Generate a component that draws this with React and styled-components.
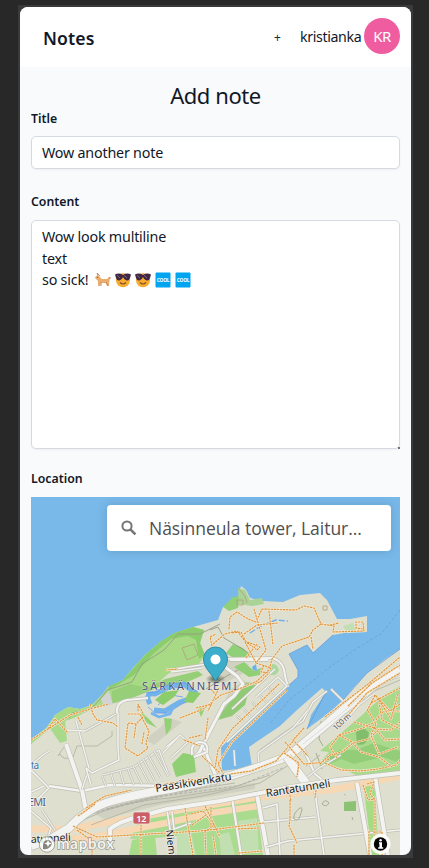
import React from "react";
import styled, { createGlobalStyle } from "styled-components";

const Global = createGlobalStyle`
  * { box-sizing: border-box; }
  body { margin: 0; background: #282828; font-family: "Noto Sans", "Open Sans", sans-serif; color: #111827; }
`;

const Backdrop = styled.div`
  height: 868px;
  padding: 5px 16px 0 18px;
  background: #282828;
  overflow: hidden;
`;
const Device = styled.div`
  height: 853px;
  padding: 2px 2px 3px;
  background: #3a3a3a;
`;
const Screen = styled.main`
  height: 848px;
  background: #f9fafc;
  border-radius: 8px;
  overflow: hidden;
`;
const Header = styled.header`
  height: 60px;
  padding: 0 11px 2px 23px;
  display: flex;
  align-items: center;
  background: #fff;
`;
const Brand = styled.div`
  flex: 1;
  font-size: 17.6px;
  font-weight: 600;
  line-height: 24px;
  padding-top: 3px;
  letter-spacing: 0.1px;
`;
const AddLink = styled.span`
  font-size: 12px;
  width: 8px;
  margin-right: 18px;
  padding-top: 2px;
  color: #1e293b;
`;
const UserName = styled.span`
  width: 61px;
  margin-right: 3px;
  font-size: 14.2px;
  letter-spacing: -0.37px;
  white-space: nowrap;
`;
const Avatar = styled.div`
  width: 36px;
  height: 36px;
  border-radius: 50%;
  background: #ef5da0;
  color: #fff;
  display: flex;
  align-items: center;
  justify-content: center;
  font-size: 15px;
  letter-spacing: -0.5px;
`;
const Form = styled.section`
  padding: 14px 11px 0;
  display: flex;
  flex-direction: column;
`;
const Heading = styled.h1`
  margin: 0;
  text-align: center;
  font-size: 22px;
  line-height: 28px;
  height: 28px;
  font-weight: 400;
  letter-spacing: -0.42px;
`;
const Label = styled.div`
  height: 20px;
  line-height: 20px;
  margin-bottom: ${(p) => p.$gap}px;
  font-size: 12.3px;
  font-weight: 600;
`;
const Field = styled.div`
  position: relative;
  height: ${(p) => p.$h}px;
  margin-bottom: ${(p) => p.$gap}px;
  padding: ${(p) => p.$pt}px 10px;
  border: 1px solid #d5d9e0;
  border-radius: 5px;
  background: #fff;
  box-shadow: 0 1px 2px rgba(0, 0, 0, 0.05);
  font-size: 14.3px;
  line-height: 21.5px;
`;
const Line = styled.div`
  display: flex;
  align-items: center;
  height: 21.5px;
  letter-spacing: ${(p) => p.$ls || 0}px;
  white-space: nowrap;
`;
const Emojis = styled.span`
  display: flex;
  gap: 4px;
  margin-left: 6px;
`;
const Grip = styled.i`
  position: absolute;
  right: -1px;
  bottom: -1px;
  width: 2px;
  height: 2px;
  background: #6b7280;
`;
const MapPane = styled.div`
  height: 358px;
  display: grid;
  background: #78b9ea;
  overflow: hidden;
  & > * { grid-area: 1 / 1; }
`;
const Search = styled.div`
  z-index: 1;
  justify-self: end;
  width: 284px;
  height: 46px;
  margin: 8px 9px 0 0;
  padding-left: 14px;
  display: flex;
  align-items: center;
  gap: 12px;
  background: #fff;
  border-radius: 4px;
  box-shadow: 0 0 8px 2px rgba(0, 0, 0, 0.1);
  color: #505050;
  font-family: "Open Sans", "Noto Sans", sans-serif;
  font-size: 17.5px;
  letter-spacing: -0.04px;
`;

const Area = styled.path`fill: ${(p) => p.$c};`;
const Stroke = styled.path`
  fill: none;
  stroke: ${(p) => p.$c};
  stroke-width: ${(p) => p.$w};
  stroke-dasharray: ${(p) => p.$dash || "none"};
  stroke-linejoin: round;
`;
const MapLabel = styled.text`
  font-family: "Noto Sans", sans-serif;
  font-size: ${(p) => p.$size}px;
  fill: ${(p) => p.$c || "#222"};
  stroke: #efefe8;
  stroke-width: ${(p) => (p.$halo === undefined ? 1.6 : p.$halo)}px;
  paint-order: stroke;
  font-weight: ${(p) => p.$weight || 400};
`;

const Road = ({ d, w = 2, c = "#f3f3f1" }) => (
  <>
    <Stroke d={d} $w={w + 1.3} $c="#bfc0b5" />
    <Stroke d={d} $w={w} $c={c} />
  </>
);
const Trail = ({ d }) => (
  <>
    <Stroke d={d} $w={2.3} $c="#f3ead6" />
    <Stroke d={d} $w={1.2} $c="#e0973e" $dash="2.4 .7" />
  </>
);

const water =
  "M31 497H400V649L385 659L367 673L352 689L343 700L330 712L307 729L311 715L326 692L322 688L297 710L280 726L249 747L252 767L222 771L221 747L262 710L287 687L298 677V670L289 654L307 645L313 653L333 635L350 632H367V616L350 619H337L327 600L320 593L300 595L283 602L263 601L250 598L246 590L241 586L238 597L223 607L218 620L193 627L175 633L160 642L145 655L133 668L123 680L108 687L102 695L92 705L80 709L68 707L55 715L47 727L31 744Z";

const greens = [
  ["#a8da86", "M55 715L68 707L80 709L92 705L102 695L108 687L123 680L133 668L145 655L160 642L175 633L193 627L204 630L200 643L205 655L199 664L180 668L168 674L150 690L122 697L108 704L92 709L74 718L56 724L31 744V740L47 727Z"],
  ["#8bcc6d", "M174 633L193 627L204 630L200 643L205 655L199 659L196 640L188 636L171 639L154 653L134 675L119 684L108 690L109 686L123 680L145 655L160 642Z"],
  ["#96cf77", "M112 691L130 684L148 688L165 679L198 671L203 675L179 686L160 687L132 698L111 704Z"],
  ["#91d076", "M223 607L233 597L240 596L238 608L229 611Z"],
  ["#abd397", "M238 588L245 590L250 600L262 598L264 604L252 606L239 604Z"],
  ["#8fd078", "M226 653L233 644L243 648L251 657L232 657Z"],
  ["#91cf75", "M234 667L244 662L254 671L263 667L260 675L249 677Z"],
  ["#a8d99c", "M267 668Q275 659 279 670Q276 678 269 674Z"],
  ["#91ca74", "M243 684Q251 680 257 686L248 694L245 705L232 716L218 720L222 712L231 700L238 691Z"],
  ["#91cf75", "M172 764L183 753L194 755L196 772L176 777Z"],
  ["#a9da8c", "M49 727L65 720L67 741L60 743Z"],
  ["#a9da8c", "M319 764L329 752L320 751L361 716L384 695L400 686V772L358 776L341 768Z"],
  ["#93cd78", "M322 760L340 750L356 750L374 743L400 751V763L383 757L354 764L341 759L328 765Z"],
  ["#81bd6b", "M356 732Q363 725 369 733Q367 748 357 744Z"],
  ["#8cc274", "M344 802L356 801V811H344Z"],
  ["#a6dc84", "M363 782L374 778L379 855H372Z"],
  ["#a9dc8f", "M139 820L191 807L256 799L263 855H190L188 835L155 838L130 839Z"],
  ["#a7dc89", "M132 840L155 836L157 855H129Z"],
  ["#c2dfb1", "M177 834L191 832L196 855H177ZM219 835L229 832L235 855H221ZM238 821L257 818L259 853L241 852Z"],
  ["#c2dfb1", "M343 626L353 623L356 631L347 633Z"],
  ["#92d175", "M140 711L149 719L157 728L147 723Z"],
  ["#92d175", "M164 718L172 719L171 728L166 735Z"],
  ["#92d175", "M198 709L206 706L201 717Z"],
];

const roads = [
  ["M31 806L49 788L31 770", 1.6], ["M49 786L82 791L110 785L176 786L220 776", 2.5],
  ["M66 744L82 790L86 811", 4], ["M76 721L89 768L82 790", 1.4],
  ["M67 730L85 731L118 713", 1.3], ["M118 711V747L119 760L92 773L86 768L91 785", 1.5],
  ["M117 713Q116 702 127 700L148 698", 2], ["M31 765L43 755L49 751", 1.3],
  ["M102 775L134 767L159 750L169 776", 1.2], ["M102 776L106 786M111 774L115 786M120 771L124 785M128 769L134 785M133 766L142 784M138 762L149 783M143 759L155 781M148 755L161 778M154 751L168 776", 1],
  ["M163 753L180 735L188 742L171 758M166 747L178 737", 1.2],
  ["M175 669L207 664L215 654M171 672L202 668", 1.5],
  ["M215 659L271 658Q284 660 285 676L288 687M230 660H268", 2],
  ["M225 667L237 676L243 684L234 696L224 704L209 733L199 753L194 757", 3],
  ["M256 697L278 677L287 686L227 742M232 709L275 669", 1.4],
  ["M237 716L243 722M244 709L250 716M252 702L258 709M260 695L266 702M268 687L274 694", 1],
  ["M204 748L215 774L222 779", 3], ["M192 755Q190 744 199 742Q209 742 207 752L194 757", 2],
  ["M327 691L313 702L303 721L285 733L260 751", 1.5],
  ["M331 689L343 701", 1.4], ["M234 750L235 766", 1.3],
  ["M259 764L258 753L293 728L308 710", 1.3],
  ["M293 750L303 748L315 774L326 783", 2],
  ["M232 798L241 855", 2.2], ["M257 795L268 855", 4],
  ["M167 810L174 855M172 812L174 829L191 823", 1.7],
  ["M315 792L324 855M264 822L315 817M266 847L288 841L400 830M263 808L277 804L280 855", 1.7],
  ["M357 783L370 855M375 776L388 855", 4],
  ["M31 811L51 828L47 840M31 792L44 786", 1.5],
  ["M42 810L55 830", 1.2],
  ["M368 694L382 682L400 676M337 730L359 705L375 693M305 779L319 768L341 755", 1.2],
];

const trails = [
  "M31 740L48 729L70 715L90 709L108 704M48 729L55 719L68 733M78 717L82 725",
  "M90 704L93 714L97 720L113 723L118 727",
  "M128 714L140 714L149 731L146 744L148 748L138 756L125 748L128 723L136 724L144 716M136 724L134 738",
  "M138 711L138 704L143 713",
  "M165 670L178 669M212 646L210 637L216 634M213 644L225 634L237 631L245 641L260 647L257 650L246 642L241 632L231 633",
  "M229 629L230 617L237 612L248 619L256 622L262 609L296 610L304 606L314 608L321 624L313 630L309 637L282 646L272 659L268 674L260 682L249 685L236 690L221 695L203 709L180 718",
  "M254 609L266 650L256 663L245 642M244 634L257 625L278 623M269 611L273 645",
  "M321 624L334 626L333 632L364 631L363 622L356 622V628L363 629M311 637L313 649M330 625L339 623",
  "M256 663L271 668L257 681L244 687M264 665L261 672L270 673M246 658L257 644",
  "M287 690L232 742L218 764L224 775L251 771L276 761L302 731",
  "M279 684L232 729L218 750M218 750L215 768",
  "M285 742L304 764L317 763L330 759M304 728L293 740L308 756M284 753L299 763L297 777",
  "M325 717L368 684L400 657M348 706L372 683L400 665M337 728L367 693L400 673",
  "M320 764L330 755L342 752L353 743L369 739L379 729L391 730L400 722M325 763L341 770L360 771L378 769L396 765L400 760",
  "M337 758L330 747L339 735L350 732L363 728L373 723L384 711L400 711M339 735L352 742L361 752L379 757L392 767",
  "M354 722L375 728L385 740L400 739M368 711L376 724L371 735L379 754L398 747M379 702L382 720L400 729",
  "M371 703L400 688M379 700L391 719L398 694M367 711L375 695L390 711L400 704",
  "M367 784L374 782L370 794L375 800L375 850M363 785L368 800L375 799M369 855L369 830M373 832L382 832V855",
  "M86 808L105 796L132 790M78 816L95 804M154 786L190 780L222 776",
  "M73 826L97 837L200 831L218 829L264 823M77 830L92 841V855M141 812V855M185 808L193 855M191 814L203 811L214 825L205 832L206 855M205 806L220 837",
  "M192 825L206 815M211 807V829M259 828L237 829M238 853L263 851M213 835L216 855",
  "M290 800V820L289 826L297 843M294 845V855M316 790L315 798M288 786L291 801",
  "M142 744L144 732M189 738L202 735M184 740L200 746M202 756L220 773M208 718L205 740",
  "M219 688L208 711M211 689L215 694M196 708L212 704",
];

function PoiMap() {
  return (
    <svg width="369" height="358" viewBox="31 497 369 358">
      <Area $c="#dfdfcf" d="M31 497H400V855H31Z" />
      <Area $c="#d1d1c2" d="M218 670L230 659L249 664L241 675L224 683ZM230 690L244 681L256 684L235 706L221 710ZM88 810L138 797L220 787L255 783V789L160 805L104 819ZM145 739L161 727L169 718L182 722L154 745Z" />
      <Area $c="#78b9ea" d={water} />
      <Stroke $c="#669ad8" $w={0.8} d="M400 649L367 673L343 700M307 729L326 692M262 710L287 687L298 677V670L289 654L307 645L313 653L333 635" />
      {greens.map(([c, d]) => <Area key={d} $c={c} d={d} />)}
      <Area $c="#d3d3d3" d="M101 699L109 691L113 704L104 707Z" />
      <Stroke $c="#72b4e9" $w={5} d="M150 704Q144 692 155 694L169 687L184 684L196 694M154 710L165 711L180 702L195 697" />
      <Stroke $c="#659aee" $w={0.8} d="M146 693L157 692L169 684L185 683L198 692M148 707L155 713L168 713L180 705L198 696M158 705L171 695L183 697" />
      <Area $c="#8bcc6d" d="M155 700L164 692L179 690L174 697L163 705ZM184 702L189 691L201 693L193 703Z" />
      <Stroke $c="#75b5ed" $w={2.6} d="M151 713L159 717L170 714L173 708" />
      <Stroke $c="#73aded" $w={1.4} $dash="6 2" d="M250 633L261 626L276 620L288 621" />
      <Area $c="#6eafed" d="M252 667L256 664L257 671L253 670Z" />
      <Stroke $c="#6a9fd8" $w={0.8} $dash="3 2" d="M400 610L382 633L356 649L330 667L288 701L270 724" />
      <Stroke $c="#959c83" $w={0.9} d="M69 718L72 713L91 709L101 698L107 690L132 682L142 664L164 650L178 634L200 634L220 624M210 630L218 627L224 638L241 648L256 658M206 689L225 677L238 670" />
      <Stroke $c="#b0b0a0" $w={0.8} d="M67 743Q54 761 60 754Q63 761 73 757L77 746L97 746L112 736L112 731" />
      <Stroke $c="#ad9e7d" $w={0.8} d="M182 648L194 644L198 655L187 660ZM239 589L245 596L247 603M237 605H243V600H237ZM323 606H327V610H323Z" />
      <Stroke $c="#91a279" $w={0.8} d="M321 721L319 739L323 746M322 769L316 753" />
      <Stroke $c="#f6d8b5" $w={7} d="M31 829H74L92 825L167 812L258 797L337 789L400 776" />
      <Stroke $c="#f6d8b5" $w={6.5} d="M31 839L88 838L166 823L211 813L258 806" />
      <Stroke $c="#b4b4a4" $w={0.9} d="M83 820Q124 800 170 798L228 789L270 775M91 825L144 805L202 796L260 783L292 763M107 809L170 793L235 783M306 766L320 755M340 714L374 691L400 680" />
      <Stroke $c="#aaa" $w={0.8} $dash="3 2" d="M87 816Q122 802 163 796L238 786L282 768M97 812L168 795L220 784" />
      {roads.map(([d, w]) => <Road key={d} d={d} w={w} />)}
      <Road d="M31 846L49 840L69 828Q87 808 112 801T170 789L230 776L262 766L289 756L303 744L343 710L377 683L400 670" w={8} />
      <Stroke $c="#ccc" $w={0.6} d="M226 778L260 770L285 758M303 744L341 714L363 695" />
      <Road d="M287 757L294 767L306 783" w={8} />
      <Road d="M110 842V829Q120 821 138 817L167 809L220 801L290 787L337 780L400 773" w={4} />
      <Stroke $c="#a3aa91" $w={0.9} d="M295 813Q302 804 302 810L299 819Q291 822 295 813M322 804Q325 798 329 803Q326 808 322 804M344 794Q346 796 345 795M352 817L353 820" />
      {trails.map((d) => <Trail key={d} d={d} />)}
      <MapLabel x="142" y="690" $size="11" $c="#48517d" $halo={0.5} textLength="95">SÄRKÄNNIEMI</MapLabel>
      <MapLabel transform="translate(156 792) rotate(-9)" $size="11" textLength="77">Paasikivenkatu</MapLabel>
      <MapLabel transform="translate(266.5 797) rotate(-9)" $size="11" textLength="65">Rantatunneli</MapLabel>
      <MapLabel transform="translate(336 731) rotate(-43)" $size="8" $c="#555" textLength="21">100 m</MapLabel>
      <MapLabel transform="translate(166 830) rotate(84)" $size="10" textLength="25">Niem</MapLabel>
      <MapLabel x="31" y="769" $size="10" $c="#3976aa" textLength="8">ta</MapLabel>
      <MapLabel x="28" y="806" $size="11" $c="#556080" textLength="18">EMI</MapLabel>
      <MapLabel transform="translate(31 843) rotate(-3)" $size="10.5" textLength="40">atunneli</MapLabel>
      <rect x="133" y="812" width="17" height="12" rx="2" fill="#cb5d65" stroke="#eee" strokeWidth=".7" />
      <MapLabel x="136.2" y="821.5" $size="9" $c="#fff" $weight={600} $halo={0}>12</MapLabel>
      <defs>
        <linearGradient id="pin" x2="0" y2="1"><stop stopColor="#3dadcc" /><stop offset="1" stopColor="#39adc9" /></linearGradient>
        <radialGradient id="pinShade"><stop stopColor="#24331f" stopOpacity=".8" /><stop offset="1" stopColor="#24331f" stopOpacity="0" /></radialGradient>
      </defs>
      <ellipse cx="215.5" cy="679" rx="10" ry="5" fill="url(#pinShade)" />
      <path d="M215.5 681C212 674 203.5 668 203.5 659A12 12 0 0 1 227.5 659C227.5 668 219 674 215.5 681Z" fill="url(#pin)" stroke="#338daa" strokeWidth="1" />
      <circle cx="215.5" cy="659.5" r="5" fill="#fff" />
      <circle cx="47" cy="844.5" r="7.7" fill="#fff" fillOpacity=".8" stroke="#85867e" strokeOpacity=".7" />
      <path d="M43 849Q42 839 49 840Q54 843 50 847Q47 850 43 849Z" fill="#85867e" />
      <path d="m48 840 1.2 2.5 2.5 1-2.5 1.1-1.2 2.5-1.1-2.5-2.5-1.1 2.5-1Z" fill="#fff" />
      <text x="57" y="849" textLength="57" fontFamily="Lato, sans-serif" fontWeight="700" fontSize="15" fill="#f4f4f0" stroke="#75766e" strokeOpacity=".7" strokeWidth="1.4" paintOrder="stroke">mapbox</text>
      <circle cx="380.5" cy="844" r="10.2" fill="#fff" fillOpacity=".9" />
      <circle cx="380.5" cy="844" r="6.7" fill="#050505" />
      <path d="M379 842.3h3v5h1.2v1.4h-5v-1.4h1.2v-3.5H379Z" fill="#fff" />
      <circle cx="380.6" cy="840.2" r="1.2" fill="#fff" />
    </svg>
  );
}

const Goat = () => (
  <svg width="16" height="16" viewBox="0 0 16 16">
    <path d="M1 4Q3 3 4 4L7 7H12L14 5L15 7L14 11V14H12L11 11H6L5 14H3V9L1 7L0 6Z" fill="#e9ad6e" />
    <path d="M3 4L2 1L5 4M14 6L15 5L15 7" fill="none" stroke="#b58a60" strokeWidth=".9" />
    <path d="M6 10V14M11 10L13 14" stroke="#c88952" strokeWidth="1" /><circle cx="2.6" cy="5.2" r=".5" fill="#543d34" />
  </svg>
);
const Shades = () => (
  <svg width="16" height="16" viewBox="0 0 16 16">
    <circle cx="8" cy="8.2" r="7" fill="#f8ac2f" />
    <path d="M0 2.5Q4 .5 8 3Q12 .5 16 2.5L15 6Q14 9 11.5 8.5Q9 8 8 5Q7 8 4.5 8.5Q2 9 1 6Z" fill="#402746" />
    <path d="M2 3.2L5 6M9 3.2L12 6" stroke="#80617a" strokeWidth="1" /><path d="M5 10.5Q8 13.5 11 10.5" fill="none" stroke="#7b4827" strokeWidth="1.1" />
  </svg>
);
const Cool = () => (
  <svg width="16" height="16" viewBox="0 0 16 16">
    <rect x=".5" y=".5" width="15" height="15" rx="1" fill="#00a5ef" />
    <text x="1.8" y="9.8" textLength="12.4" fill="#fff" fontSize="4.8" fontWeight="700" fontFamily="Noto Sans, sans-serif">COOL</text>
  </svg>
);

export default function App() {
  return (
    <Backdrop>
      <Global />
      <Device>
        <Screen>
          <Header>
            <Brand>Notes</Brand>
            <AddLink>+</AddLink>
            <UserName>kristianka</UserName>
            <Avatar>KR</Avatar>
          </Header>
          <Form>
            <Heading>Add note</Heading>
            <Label $gap={7}>Title</Label>
            <Field $h={33} $gap={23} $pt={5}><Line $ls={-0.2}>Wow another note</Line></Field>
            <Label $gap={8}>Content</Label>
            <Field $h={229} $gap={20} $pt={5}>
              <Line $ls={-0.2}>Wow look multiline</Line>
              <Line $ls={-0.2}>text</Line>
              <Line $ls={-0.2}>so sick!<Emojis><Goat /><Shades /><Shades /><Cool /><Cool /></Emojis></Line>
              <Grip />
            </Field>
            <Label $gap={8}>Location</Label>
            <MapPane>
              <PoiMap />
              <Search>
                <svg width="16" height="16" viewBox="0 0 16 16" fill="none" stroke="#757575">
                  <circle cx="6" cy="6" r="4.6" strokeWidth="2" /><path d="M9.4 9.4L14.4 14.4" strokeWidth="2.6" />
                </svg>
                <span>Näsinneula tower, Laitur...</span>
              </Search>
            </MapPane>
          </Form>
        </Screen>
      </Device>
    </Backdrop>
  );
}
